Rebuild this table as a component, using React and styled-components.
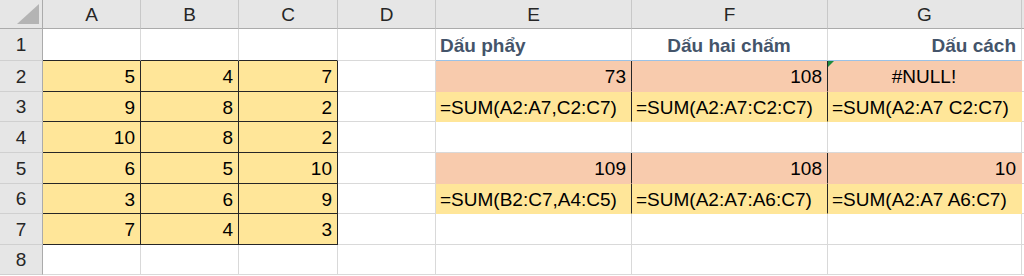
import React from "react";
import styled, { createGlobalStyle } from "styled-components";

const Global = createGlobalStyle`
  html, body { margin: 0; padding: 0; background: #ffffff; }
  body { font-family: "Liberation Sans", Arial, sans-serif; }
`;

const GRID = "#d9d9d9";
const DARK = "#262626";
const YELLOW = "#ffe699";
const SALMON = "#f8cbad";
const HEAD_BG = "#e6e6e6";

const Sheet = styled.div`
  display: grid;
  grid-template-columns: 43px 98px 98px 99px 98px 196px 196px 194px 1fr;
  grid-template-rows: 29px 32px 31px 30px 31px 31px 30px 31px 30px;
  width: 1024px;
  height: 276px;
  overflow: hidden;
  font-size: 19px;
  color: #000;
`;

const Corner = styled.div`
  background: ${HEAD_BG};
  border-right: 1px solid #ababab;
  border-bottom: 1px solid #ababab;
  box-sizing: border-box;
  display: flex;
  align-items: flex-end;
  justify-content: flex-end;
  padding: 0 3px 4px 0;
`;

const ColHead = styled.div`
  background: ${HEAD_BG};
  border-right: 1px solid #c8c8c8;
  border-bottom: 1px solid #ababab;
  box-sizing: border-box;
  display: flex;
  align-items: center;
  justify-content: center;
  color: #262626;
  padding-top: 1px;
`;

const RowHead = styled.div`
  background: ${HEAD_BG};
  border-right: 1px solid #ababab;
  border-bottom: 1px solid #d0d0d0;
  box-sizing: border-box;
  display: flex;
  align-items: center;
  justify-content: center;
  color: #262626;
  padding-top: 1px;
`;

const Cell = styled.div`
  position: relative;
  box-sizing: border-box;
  background: ${(p) => p.$fill || "#ffffff"};
  border-right: 1px solid ${(p) => p.$right || GRID};
  border-bottom: 1px solid ${(p) => p.$bottom || GRID};
  display: flex;
  align-items: center;
  justify-content: ${(p) =>
    p.$align === "right" ? "flex-end" : p.$align === "center" ? "center" : "flex-start"};
  padding: 2px 5px 0 4px;
  white-space: nowrap;
  overflow: visible;
  font-weight: ${(p) => (p.$bold ? 700 : 400)};
  color: ${(p) => (p.$bold ? "#44546a" : "#000")};
`;

const ErrorMark = styled.span`
  position: absolute;
  top: 0;
  left: 0;
  width: 0;
  height: 0;
  border-top: 6px solid #1e8a3e;
  border-right: 6px solid transparent;
`;

const cols = ["A", "B", "C", "D", "E", "F", "G"];

const tableData = [
  [5, 4, 7],
  [9, 8, 2],
  [10, 8, 2],
  [6, 5, 10],
  [3, 6, 9],
  [7, 4, 3],
];

const right = {
  1: {
    E: { text: "Dấu phẩy", align: "left", bold: true },
    F: { text: "Dấu hai chấm", align: "center", bold: true },
    G: { text: "Dấu cách", align: "right", bold: true },
  },
  2: {
    E: { text: "73", align: "right", fill: SALMON },
    F: { text: "108", align: "right", fill: SALMON },
    G: { text: "#NULL!", align: "center", fill: SALMON, error: true },
  },
  3: {
    E: { text: "=SUM(A2:A7,C2:C7)", fill: YELLOW },
    F: { text: "=SUM(A2:A7:C2:C7)", fill: YELLOW },
    G: { text: "=SUM(A2:A7 C2:C7)", fill: YELLOW },
  },
  5: {
    E: { text: "109", align: "right", fill: SALMON },
    F: { text: "108", align: "right", fill: SALMON },
    G: { text: "10", align: "right", fill: SALMON },
  },
  6: {
    E: { text: "=SUM(B2:C7,A4:C5)", fill: YELLOW },
    F: { text: "=SUM(A2:A7:A6:C7)", fill: YELLOW },
    G: { text: "=SUM(A2:A7 A6:C7)", fill: YELLOW },
  },
};

function cellProps(r, c) {
  const ci = cols.indexOf(c);
  // Yellow source table A2:C7
  if (r >= 2 && r <= 7 && ci <= 2) {
    return {
      text: String(tableData[r - 2][ci]),
      align: "right",
      fill: YELLOW,
      right: DARK,
      bottom: DARK,
    };
  }
  if (r === 1 && ci <= 2) return { bottom: DARK };
  const spec = right[r] && right[r][c];
  if (spec) {
    const out = { ...spec };
    if (r === 1) out.bottom = "#9bc2e6";
    if (spec.fill) {
      out.bottom = spec.fill;
      out.right = c === "G" ? spec.fill : DARK;
    }
    return out;
  }
  return {};
}

export default function App() {
  const rows = [1, 2, 3, 4, 5, 6, 7, 8];
  return (
    <>
      <Global />
      <Sheet>
        <Corner>
          <svg width="22" height="20" viewBox="0 0 22 20">
            <polygon points="22,0 22,20 0,20" fill="#b4b4b4" />
          </svg>
        </Corner>
        {cols.map((c) => (
          <ColHead key={c}>{c}</ColHead>
        ))}
        <ColHead />
        {rows.map((r) => (
          <React.Fragment key={r}>
            <RowHead>{r}</RowHead>
            {cols.map((c) => {
              const p = cellProps(r, c);
              return (
                <Cell
                  key={c}
                  $fill={p.fill}
                  $align={p.align}
                  $right={p.right}
                  $bottom={p.bottom}
                  $bold={p.bold}
                >
                  {p.error && <ErrorMark />}
                  {p.text}
                </Cell>
              );
            })}
            <Cell />
          </React.Fragment>
        ))}
      </Sheet>
    </>
  );
}
